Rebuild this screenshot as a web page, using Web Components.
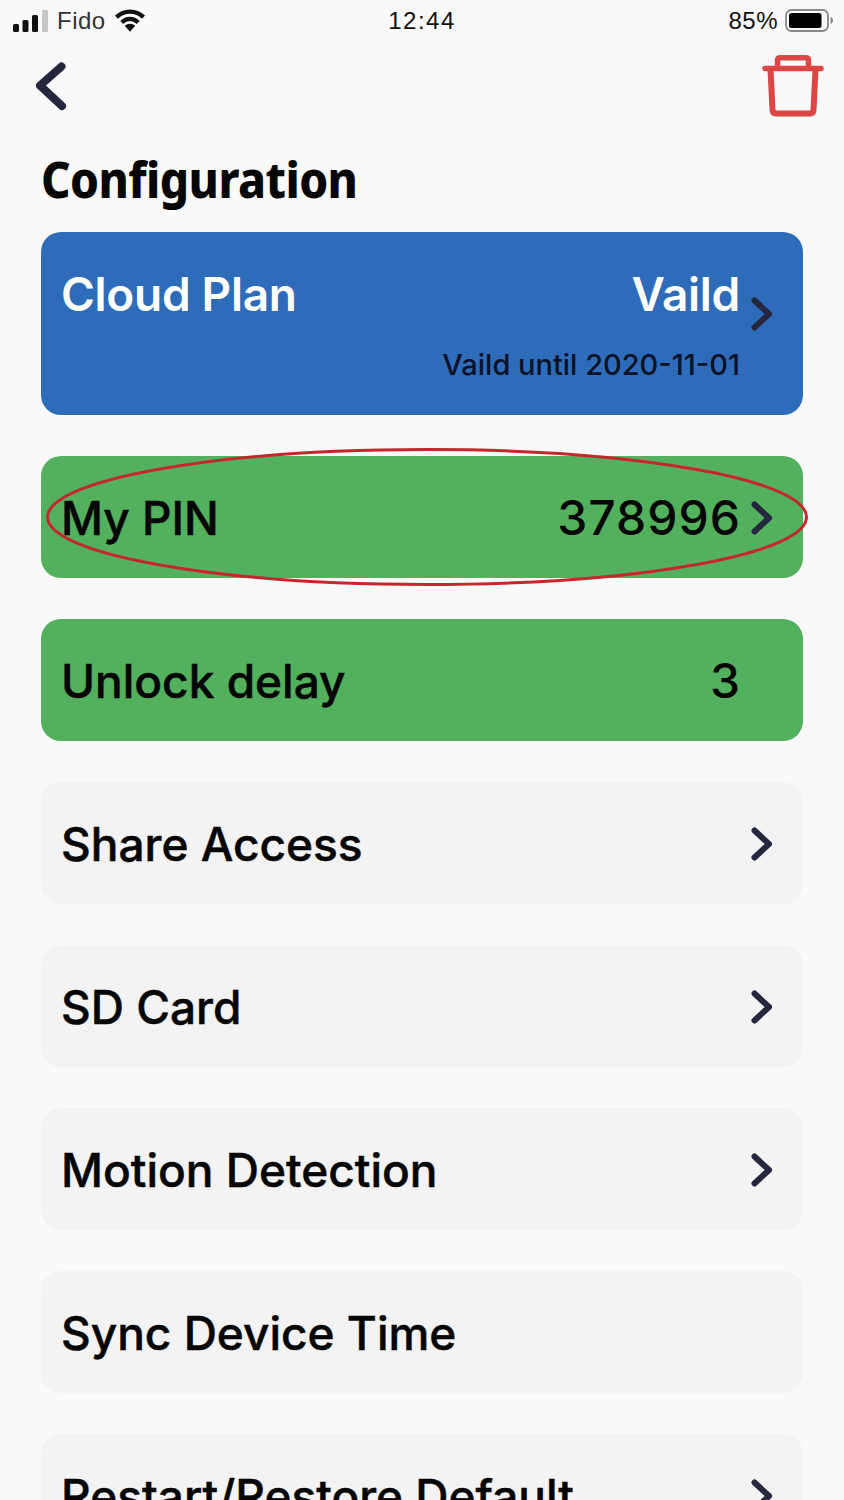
<!DOCTYPE html>
<html>
<head>
<meta charset="utf-8">
<style>
  html, body { margin: 0; height: 1500px; overflow: hidden; background: #f9f9f9; }
</style>
</head>
<body>
<config-screen></config-screen>
<script>
const chevron = `<svg width="22" height="34" viewBox="0 0 22 34"><path d="M3.5 3.5 L18 17 L3.5 30.5" fill="none" stroke="#25273f" stroke-width="6" stroke-linecap="round" stroke-linejoin="round"/></svg>`;

class StatusBar extends HTMLElement {
  connectedCallback() {
    const shadow = this.attachShadow({ mode: "open" });
    shadow.innerHTML = `
      <style>
        :host { display: grid; grid-template-columns: 1fr auto 1fr; align-items: center; height: 41px; padding: 0 10px 0 13px; font: 24px "Liberation Sans", sans-serif; color: #111; letter-spacing: 0.5px; }
        .left { display: flex; align-items: center; gap: 9px; color: #333; }
        .right { display: flex; justify-content: flex-end; align-items: center; gap: 7px; }
        .time { font-size: 24px; letter-spacing: 1.5px; margin-left: -3px; }
        svg { display: block; }
      </style>
      <div class="left">
        <svg width="35" height="22" viewBox="0 0 35 22">
          <rect x="0" y="14" width="6" height="8" rx="1.5" fill="#111"/>
          <rect x="9.5" y="10" width="6" height="12" rx="1.5" fill="#111"/>
          <rect x="19" y="5" width="6" height="17" rx="1.5" fill="#111"/>
          <rect x="29" y="0" width="6" height="22" rx="1" fill="#c6c6c6"/>
        </svg>
        <span>Fido</span>
        <svg width="30" height="23" viewBox="0 0 31 23">
          <path d="M1.5 8 C9.5 0.5 21.5 0.5 29.5 8" fill="none" stroke="#111" stroke-width="4.5"/>
          <path d="M7 13.5 C12 8.5 19 8.5 24 13.5" fill="none" stroke="#111" stroke-width="4.5"/>
          <path d="M10 17 C13 14.2 18 14.2 21 17 L15.5 23 Z" fill="#111"/>
        </svg>
      </div>
      <span class="time">12:44</span>
      <div class="right">
        <span>85%</span>
        <svg width="49" height="24" viewBox="0 0 49 24">
          <rect x="1" y="1" width="42" height="21" rx="5.5" fill="none" stroke="#888" stroke-width="1.8"/>
          <rect x="4" y="4" width="32.5" height="15" rx="2.5" fill="#000"/>
          <path d="M45.5 8 C47.5 9 48 10 48 11.5 C48 13 47.5 14 45.5 15 Z" fill="#888"/>
        </svg>
      </div>`;
  }
}

class NavHeader extends HTMLElement {
  connectedCallback() {
    const shadow = this.attachShadow({ mode: "open" });
    shadow.innerHTML = `
      <style>
        :host { display: flex; justify-content: space-between; align-items: flex-start; padding: 14px 20px 0 35px; height: 84px; box-sizing: border-box; }
        .back { margin-top: 6px; }
        svg { display: block; }
      </style>
      <svg class="back" width="32" height="50" viewBox="0 0 32 50">
        <path d="M26.5 5.5 L5 24.5 L27 45" fill="none" stroke="#25273f" stroke-width="8" stroke-linecap="round" stroke-linejoin="round"/>
      </svg>
      <svg width="62" height="62" viewBox="0 0 62 62">
        <path d="M3 13.5 H59" fill="none" stroke="#de4545" stroke-width="5.5" stroke-linecap="round"/>
        <path d="M15.5 13 V5.5 Q15.5 2.8 18.5 2.8 H43.5 Q46.5 2.8 46.5 5.5 V13" fill="none" stroke="#de4545" stroke-width="5.5"/>
        <path d="M8.5 14 L10.5 55 Q10.7 58.5 14.5 58.5 H47.5 Q51.3 58.5 51.5 55 L53.5 14" fill="none" stroke="#de4545" stroke-width="6"/>
      </svg>`;
  }
}

class ConfigRow extends HTMLElement {
  connectedCallback() {
    const shadow = this.attachShadow({ mode: "open" });
    const noArrow = this.hasAttribute("no-arrow");
    shadow.innerHTML = `
      <style>
        :host { display: flex; align-items: center; box-sizing: border-box; height: 122px; padding: 2px 30px 0 20px; border-radius: 20px; background: var(--row-bg, #f3f3f3); font: 500 46px/54px Inter, sans-serif; color: #060606; }
        .label { flex: 1; white-space: nowrap; -webkit-text-stroke: 0.5px #060606; }
        .value { white-space: nowrap; font-size: 48px; letter-spacing: 1px; margin-right: -1px; }
        .arrow { width: 22px; margin-left: 11px; display: flex; }
        svg { display: block; }
      </style>
      <span class="label"><slot></slot></span>
      <span class="value"><slot name="value"></slot></span>
      <span class="arrow">${noArrow ? "" : chevron}</span>`;
  }
}

class PlanCard extends HTMLElement {
  connectedCallback() {
    const shadow = this.attachShadow({ mode: "open" });
    shadow.innerHTML = `
      <style>
        :host { display: grid; grid-template-columns: 1fr auto 22px; align-content: start; column-gap: 11px; box-sizing: border-box; height: 183px; padding: 35px 30px 0 20px; border-radius: 20px; background: #2e6bb9; font: 600 46px/54px Inter, sans-serif; color: #fff; letter-spacing: -0.3px; }
        .status { justify-self: end; }
        .arrow { padding-top: 30px; }
        .until { grid-column: 1 / 3; justify-self: end; margin-top: 17px; font-size: 29px; font-weight: 500; line-height: 34px; letter-spacing: 0; color: #0a1228; white-space: nowrap; }
        svg { display: block; }
      </style>
      <span><slot name="title"></slot></span>
      <span class="status"><slot name="status"></slot></span>
      <span class="arrow">${chevron}</span>
      <span class="until"><slot name="until"></slot></span>`;
  }
}

class HandCircle extends HTMLElement {
  connectedCallback() {
    const shadow = this.attachShadow({ mode: "open" });
    shadow.innerHTML = `
      <style>
        :host { position: absolute; left: 5px; top: -8px; width: 762px; height: 138px; pointer-events: none; }
        svg { display: block; overflow: visible; }
      </style>
      <svg width="762" height="138" viewBox="0 0 762 138">
        <ellipse cx="381" cy="69" rx="379.5" ry="67.5" fill="none" stroke="#c5282c" stroke-width="3"/>
      </svg>`;
  }
}

class ConfigScreen extends HTMLElement {
  connectedCallback() {
    const shadow = this.attachShadow({ mode: "open" });
    shadow.innerHTML = `
      <style>
        :host { display: block; height: 1500px; overflow: hidden; }
        h1 { margin: 0; height: 107px; padding-left: 41px; font: 800 50px/108px "Noto Sans", sans-serif; color: #060606; letter-spacing: -0.6px; }
        h1 span { display: inline-block; transform: scaleX(0.92); transform-origin: left; }
        .list { display: flex; flex-direction: column; gap: 41px; padding: 0 41px; }
        .pin { position: relative; --row-bg: #53b05c; }
        .green { --row-bg: #53b05c; }
      </style>
      <status-bar></status-bar>
      <nav-header></nav-header>
      <h1><span>Configuration</span></h1>
      <div class="list">
        <plan-card>
          <span slot="title">Cloud Plan</span>
          <span slot="status">Vaild</span>
          <span slot="until">Vaild until 2020-11-01</span>
        </plan-card>
        <config-row class="pin">My PIN<span slot="value">378996</span><hand-circle slot="value"></hand-circle></config-row>
        <config-row class="green" no-arrow>Unlock delay<span slot="value">3</span></config-row>
        <config-row>Share Access</config-row>
        <config-row>SD Card</config-row>
        <config-row>Motion Detection</config-row>
        <config-row no-arrow>Sync Device Time</config-row>
        <config-row>Restart/Restore Default</config-row>
      </div>`;
  }
}

customElements.define("status-bar", StatusBar);
customElements.define("nav-header", NavHeader);
customElements.define("config-row", ConfigRow);
customElements.define("plan-card", PlanCard);
customElements.define("hand-circle", HandCircle);
customElements.define("config-screen", ConfigScreen);
</script>
</body>
</html>
